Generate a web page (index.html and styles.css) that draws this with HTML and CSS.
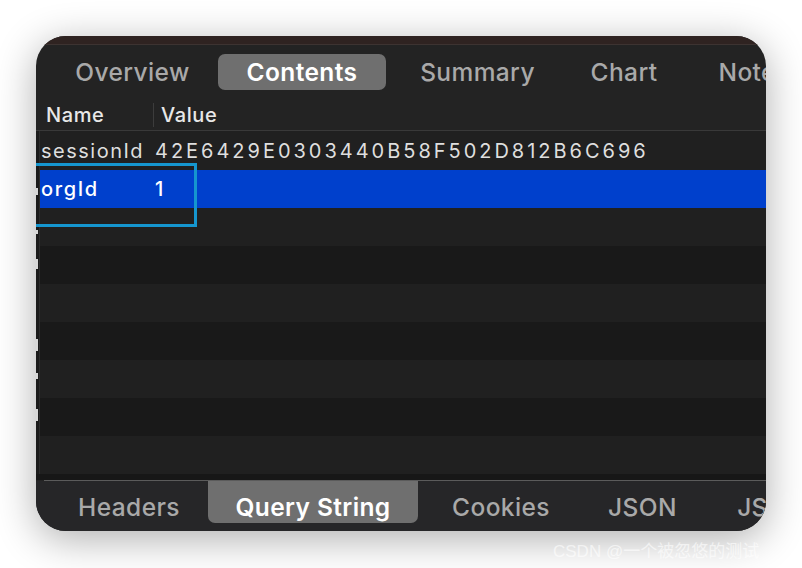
FILE: index.html
```html
<!DOCTYPE html>
<html>
<head>
<meta charset="utf-8">
<link rel="stylesheet" href="styles.css">
</head>
<body>
<div class="window">
  <div class="titlebar"></div>
  <div class="tabs top-tabs">
    <div class="tab">Overview</div>
    <div class="tab active">Contents</div>
    <div class="tab">Summary</div>
    <div class="tab">Chart</div>
    <div class="tab">Notes</div>
  </div>
  <div class="thead">
    <div class="th th-name">Name</div>
    <div class="th th-value">Value</div>
  </div>
  <div class="list">
    <div class="gutter">
      <div class="gcell"></div>
      <div class="gcell"><span class="frag f1"></span></div>
      <div class="gcell"><span class="frag f2"></span></div>
      <div class="gcell"><span class="frag f3"></span></div>
      <div class="gcell"></div>
      <div class="gcell"><span class="frag f4"></span></div>
      <div class="gcell"><span class="frag f5"></span></div>
      <div class="gcell"><span class="frag f6"></span></div>
      <div class="gcell"></div>
    </div>
    <div class="rows">
      <div class="row"><span class="cname">sessionId</span><span class="cval">42E6429E0303440B58F502D812B6C696</span></div>
      <div class="row selected"><span class="cname">orgId</span><span class="cval">1</span></div>
      <div class="row"></div>
      <div class="row"></div>
      <div class="row"></div>
      <div class="row"></div>
      <div class="row"></div>
      <div class="row"></div>
      <div class="row"></div>
    </div>
  </div>
  <div class="bottom-gap"></div>
  <div class="bottom-line"></div>
  <div class="tabs bottom-tabs">
    <div class="tab">Headers</div>
    <div class="tab active">Query String</div>
    <div class="tab">Cookies</div>
    <div class="tab">JSON</div>
    <div class="tab">JSON Text</div>
  </div>
  <div class="highlight"></div>
</div>
<div class="watermark">CSDN @一个被忽悠的测试</div>
</body>
</html>
```

FILE: styles.css
```css
html, body {
  margin: 0;
  padding: 0;
  background: #ffffff;
}
body {
  width: 802px;
  height: 568px;
  overflow: hidden;
  position: relative;
  font-family: Inter, "Noto Sans", sans-serif;
}
.window {
  position: relative;
  margin: 36px 0 0 36px;
  width: 730px;
  height: 495px;
  border-radius: 30px;
  overflow: hidden;
  background: #232323;
  box-shadow: 0 8px 40px rgba(0, 0, 0, 0.32);
  display: flex;
  flex-direction: column;
}
.titlebar {
  height: 8px;
  flex: none;
  background: #2f2321;
  border-bottom: 1px solid #3d3331;
}
.tabs {
  display: grid;
  flex: none;
  white-space: nowrap;
}
.tab {
  text-align: center;
  font-size: 24.5px;
  font-weight: 500;
  color: #a9a9a9;
  letter-spacing: 0.4px;
}
.tab.active {
  color: #ffffff;
  font-weight: 600;
  background: #6f6f6f;
}
.top-tabs {
  height: 52px;
  padding: 9px 0 0 11px;
  box-sizing: border-box;
  grid-template-columns: 171px 168px 183px 110px 150px;
}
.top-tabs .tab {
  height: 36px;
  line-height: 36px;
}
.top-tabs .tab.active {
  border-radius: 7px;
}
.thead {
  height: 33px;
  flex: none;
  display: flex;
  align-items: center;
  border-bottom: 1px solid #393939;
  color: #e8e8e8;
  font-size: 20px;
  font-weight: 500;
  letter-spacing: 0.6px;
}
.th-name {
  width: 107px;
  padding-left: 10px;
  height: 24px;
  line-height: 24px;
  border-right: 1px solid #3c3c3c;
  margin-top: 2px;
}
.th-value {
  padding-left: 7px;
  height: 24px;
  line-height: 24px;
  margin-top: 2px;
}
.list {
  flex: none;
  display: flex;
  height: 343px;
}
.gutter {
  width: 3px;
  background: #1b1b1b;
  border-right: 1px solid #2c2c2c;
  padding-top: 1px;
}
.gcell {
  height: 38px;
  display: flex;
  align-items: center;
}
.frag {
  display: block;
  width: 2px;
  background: #d8d8d8;
}
.f1 { height: 7px; margin-top: 4px; }
.f2 { height: 4px; margin-top: 10px; }
.f3 { height: 10px; margin-top: -2px; }
.f4 { height: 12px; margin-top: 8px; }
.f5 { height: 6px; margin-top: -6px; }
.f6 { height: 12px; margin-top: -4px; }
.rows {
  flex: 1;
  padding-top: 1px;
  background: #202020;
}
.row {
  height: 38px;
  display: flex;
  align-items: center;
  color: #dedede;
  font-size: 20px;
  white-space: nowrap;
}
.row:nth-child(odd) {
  background: #202020;
}
.row:nth-child(even) {
  background: #191919;
}
.row.selected {
  background: #0040cc;
  color: #ffffff;
  font-weight: 500;
}
.cname {
  width: 113px;
  padding-left: 1px;
  letter-spacing: 1.5px;
  box-sizing: border-box;
}
.row.selected .cname {
  letter-spacing: 1.6px;
}
.cval {
  padding-left: 2px;
  letter-spacing: 2.98px;
}
.bottom-gap {
  height: 6px;
  flex: none;
  background: #171717;
}
.bottom-line {
  height: 1px;
  flex: none;
  margin-left: 8px;
  background: #5b5b5b;
}
.bottom-tabs {
  height: 50px;
  background: #262628;
  padding-left: 14px;
  grid-template-columns: 158px 210px 166px 117px 200px;
}
.bottom-tabs .tab {
  height: 50px;
  line-height: 52px;
}
.bottom-tabs .tab.active {
  height: 42px;
  border-radius: 0 0 7px 7px;
}
.highlight {
  position: absolute;
  left: -8px;
  top: 127px;
  width: 163px;
  height: 58px;
  border: 3px solid #1596cf;
}
.watermark {
  position: absolute;
  left: 553px;
  top: 537px;
  font-family: "Liberation Sans", "Noto Sans CJK SC", sans-serif;
  font-size: 17px;
  color: rgba(255, 255, 255, 0.6);
  white-space: nowrap;
}
```
